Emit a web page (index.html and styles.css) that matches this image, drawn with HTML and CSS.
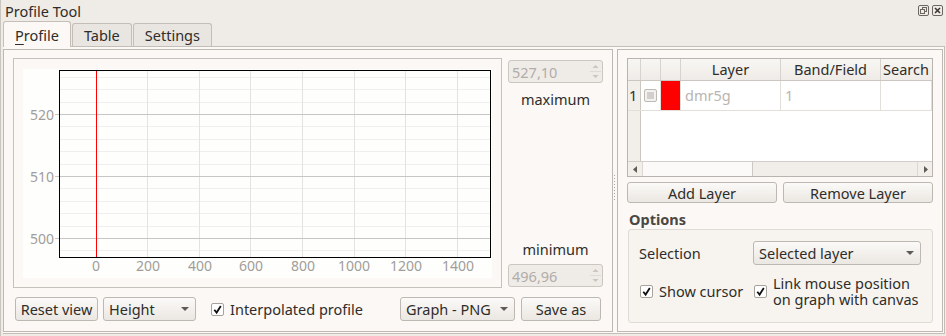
FILE: index.html
```html
<!DOCTYPE html>
<html lang="en">
<head>
    <meta charset="UTF-8">
    <title>Profile Tool</title>
    <link rel="stylesheet" href="styles.css">
</head>
<body>
<div class="dock">
    <div class="titlebar">
        <span class="title">Profile Tool</span>
        <span class="title-icons">
            <svg width="11" height="11" viewBox="0 0 11 11"><rect x="0.5" y="0.5" width="10" height="10" rx="1.5" fill="none" stroke="#6b665f"/><rect x="4.5" y="2.5" width="4" height="4" fill="none" stroke="#6b665f"/><rect x="2.5" y="4.5" width="4" height="4" fill="#efebe7" stroke="#6b665f"/></svg>
            <svg width="11" height="11" viewBox="0 0 11 11"><rect x="0.5" y="0.5" width="10" height="10" rx="1.5" fill="none" stroke="#6b665f"/><path d="M3 3 L8 8 M8 3 L3 8" stroke="#3c3934" stroke-width="1.6"/></svg>
        </span>
    </div>
    <div class="tabbar">
        <div class="tab active"><span class="mnemonic">P</span>rofile</div>
        <div class="tab">Table</div>
        <div class="tab">Settings</div>
    </div>
    <div class="pane">
        <div class="panel panel-left">
            <div class="plot-row">
                <div class="plot-frame">
                    <svg class="plot" width="469" height="209" viewBox="0 0 469 209" shape-rendering="crispEdges">
                        <g stroke="#efefef">
                            <line x1="37" y1="8.5" x2="467" y2="8.5"/>
                            <line x1="37" y1="20.5" x2="467" y2="20.5"/>
                            <line x1="37" y1="33.5" x2="467" y2="33.5"/>
                            <line x1="37" y1="57.5" x2="467" y2="57.5"/>
                            <line x1="37" y1="70.5" x2="467" y2="70.5"/>
                            <line x1="37" y1="82.5" x2="467" y2="82.5"/>
                            <line x1="37" y1="95.5" x2="467" y2="95.5"/>
                            <line x1="37" y1="119.5" x2="467" y2="119.5"/>
                            <line x1="37" y1="132.5" x2="467" y2="132.5"/>
                            <line x1="37" y1="144.5" x2="467" y2="144.5"/>
                            <line x1="37" y1="157.5" x2="467" y2="157.5"/>
                            <line x1="37" y1="181.5" x2="467" y2="181.5"/>
                        </g>
                        <g stroke="#e3e3e3">
                            <line x1="124.5" y1="2" x2="124.5" y2="188"/>
                            <line x1="176.5" y1="2" x2="176.5" y2="188"/>
                            <line x1="227.5" y1="2" x2="227.5" y2="188"/>
                            <line x1="279.5" y1="2" x2="279.5" y2="188"/>
                            <line x1="331.5" y1="2" x2="331.5" y2="188"/>
                            <line x1="382.5" y1="2" x2="382.5" y2="188"/>
                            <line x1="434.5" y1="2" x2="434.5" y2="188"/>
                        </g>
                        <g stroke="#c6c6c6">
                            <line x1="32" y1="45.5" x2="467" y2="45.5"/>
                            <line x1="32" y1="107.5" x2="467" y2="107.5"/>
                            <line x1="32" y1="169.5" x2="467" y2="169.5"/>
                        </g>
                        <line x1="73.5" y1="2" x2="73.5" y2="188" stroke="#ff0000"/>
                        <rect x="36.5" y="1.5" width="431" height="187" fill="none" stroke="#000" stroke-width="1.4"/>
                        <g class="tick-labels" text-anchor="end">
                            <text x="31" y="50.5">520</text>
                            <text x="31" y="112.5">510</text>
                            <text x="31" y="174.5">500</text>
                        </g>
                        <g class="tick-labels" text-anchor="middle">
                            <text x="73" y="202">0</text>
                            <text x="125" y="202">200</text>
                            <text x="177" y="202">400</text>
                            <text x="228" y="202">600</text>
                            <text x="280" y="202">800</text>
                            <text x="331" y="202">1000</text>
                            <text x="383" y="202">1200</text>
                            <text x="435" y="202">1400</text>
                        </g>
                    </svg>
                </div>
                <div class="range">
                    <div class="spin">
                        <span>527,10</span>
                        <svg class="spin-arrows" width="13" height="21" viewBox="0 0 13 21"><path d="M1 10.5 H12" stroke="#dedad6"/><path d="M3.5 7 L6.5 4 L9.5 7 Z" fill="#c9c5c1"/><path d="M3.5 14 L6.5 17 L9.5 14 Z" fill="#c9c5c1"/></svg>
                    </div>
                    <div class="range-label">maximum</div>
                    <div class="range-fill"></div>
                    <div class="range-label">minimum</div>
                    <div class="spin spin-min">
                        <span>496,96</span>
                        <svg class="spin-arrows" width="13" height="21" viewBox="0 0 13 21"><path d="M1 10.5 H12" stroke="#dedad6"/><path d="M3.5 7 L6.5 4 L9.5 7 Z" fill="#c9c5c1"/><path d="M3.5 14 L6.5 17 L9.5 14 Z" fill="#c9c5c1"/></svg>
                    </div>
                </div>
            </div>
            <div class="controls">
                <div class="button reset-btn">Reset view</div>
                <div class="combo height-combo">Height<span class="caret"></span></div>
                <label class="check interp">
                    <span class="box"><svg width="11" height="11" viewBox="0 0 11 11"><path d="M2.3 5.8 L4.6 8.6 L8.8 2" fill="none" stroke="#111" stroke-width="1.8"/></svg></span>
                    Interpolated profile
                </label>
                <div class="combo graph-combo">Graph - PNG<span class="caret"></span></div>
                <div class="button save-btn">Save as</div>
            </div>
        </div>
        <div class="splitter"><span class="grip"></span></div>
        <div class="panel panel-right">
            <div class="table">
                <div class="table-head">
                    <div class="th corner"></div>
                    <div class="th"></div>
                    <div class="th"></div>
                    <div class="th">Layer</div>
                    <div class="th">Band/Field</div>
                    <div class="th th-last">Search</div>
                </div>
                <div class="table-row">
                    <div class="td row-num">1</div>
                    <div class="td cell-check"><span class="mini-box"></span></div>
                    <div class="td cell-color"></div>
                    <div class="td muted">dmr5g</div>
                    <div class="td muted">1</div>
                    <div class="td"></div>
                </div>
                <div class="table-fill"><div class="fill-head"></div></div>
                <div class="hscroll">
                    <span class="scroll-btn"><svg width="5" height="7" viewBox="0 0 5 7"><path d="M4 0 L0 3.5 L4 7 Z" fill="#5f5b56"/></svg></span>
                    <span class="scroll-handle"></span>
                    <span class="scroll-trough"></span>
                    <span class="scroll-btn"><svg width="5" height="7" viewBox="0 0 5 7"><path d="M1 0 L5 3.5 L1 7 Z" fill="#5f5b56"/></svg></span>
                </div>
            </div>
            <div class="layer-buttons">
                <div class="button">Add Layer</div>
                <div class="button">Remove Layer</div>
            </div>
            <div class="options-title">Options</div>
            <div class="options">
                <div class="options-grid">
                    <span class="sel-label">Selection</span>
                    <div class="combo sel-combo">Selected layer<span class="caret"></span></div>
                    <label class="check">
                        <span class="box"><svg width="11" height="11" viewBox="0 0 11 11"><path d="M2.3 5.8 L4.6 8.6 L8.8 2" fill="none" stroke="#111" stroke-width="1.8"/></svg></span>
                        Show cursor
                    </label>
                    <label class="check">
                        <span class="box"><svg width="11" height="11" viewBox="0 0 11 11"><path d="M2.3 5.8 L4.6 8.6 L8.8 2" fill="none" stroke="#111" stroke-width="1.8"/></svg></span>
                        <span class="two-line"><span>Link mouse position</span><span>on graph with canvas</span></span>
                    </label>
                </div>
            </div>
        </div>
    </div>
</div>
</body>
</html>
```

FILE: styles.css
```css
* {
    box-sizing: border-box;
}
body {
    margin: 0;
    width: 946px;
    height: 336px;
    overflow: hidden;
    background-color: #efebe7;
    font-family: "Noto Sans", "Open Sans", sans-serif;
    font-size: 14.5px;
    line-height: 18px;
    color: #2f2d2a;
}
.dock {
    height: 336px;
    border-left: 1px solid #c9c4be;
    display: flex;
    flex-direction: column;
}
.titlebar {
    height: 21px;
    display: flex;
    align-items: center;
    justify-content: space-between;
    padding: 0 3px 0 4px;
}
.title-icons {
    display: flex;
    gap: 3px;
    margin-top: -1px;
}
.title-icons svg {
    display: block;
}
.tabbar {
    height: 25px;
    display: flex;
    align-items: flex-end;
    padding-left: 2px;
    position: relative;
    z-index: 1;
}
.tab {
    height: 23px;
    padding: 0 11px;
    margin-right: 1px;
    border: 1px solid #c3beb8;
    border-bottom: none;
    border-radius: 3px 3px 0 0;
    background-color: #e9e5e0;
    line-height: 22px;
}
.tab.active {
    height: 26px;
    margin-bottom: -1px;
    background-color: #fbf8f5;
    line-height: 26px;
}
.mnemonic {
    text-decoration: underline;
    text-underline-offset: 3px;
}
.pane {
    margin-left: 2px;
    width: 942px;
    height: 288px;
    border-top: 1px solid #c3beb8;
    border-right: 1px solid #c3beb8;
    border-bottom: 1px solid #c3beb8;
    background-color: #fbf8f5;
    padding: 2px 1px 1px 0;
    display: flex;
}
.panel {
    height: 283px;
    border: 1px solid #bdb8b2;
}
.panel-left {
    width: 610px;
    padding: 8px 9px 0 9px;
    display: flex;
    flex-direction: column;
    gap: 9px;
}
.splitter {
    width: 4px;
    position: relative;
}
.splitter .grip {
    position: absolute;
    left: 1px;
    top: 126px;
    width: 1px;
    height: 26px;
    background-image: linear-gradient(#a9a49e 50%, transparent 50%);
    background-size: 1px 3px;
}
.panel-right {
    width: 326px;
    padding: 8px 9px 0 9px;
}
.plot-row {
    height: 230px;
    display: flex;
    gap: 6px;
}
.plot-frame {
    width: 489px;
    height: 230px;
    border: 1px solid #c6c1bb;
    padding: 10px 9px 9px 9px;
}
.plot {
    display: block;
    background-color: #fefefd;
}
.tick-labels {
    font-family: "Noto Sans", sans-serif;
    font-size: 14px;
    fill: #a19d99;
}
.range {
    width: 95px;
    display: flex;
    flex-direction: column;
    align-items: center;
}
.spin {
    width: 95px;
    height: 23px;
    margin-top: 2px;
    border: 1px solid #cbc6c0;
    border-radius: 3px;
    background-color: #efebe7;
    color: #b1ada9;
    display: flex;
    align-items: center;
    justify-content: space-between;
    padding-left: 3px;
    padding-right: 0;
}
.spin-min {
    margin-top: 6px;
    margin-bottom: 1px;
}
.spin-arrows {
    display: block;
}
.range-label {
    margin-top: 7px;
    height: 18px;
}
.range-fill {
    flex: 1;
}
.controls {
    height: 24px;
    margin: 0 2px;
    display: flex;
    align-items: center;
}
.button, .combo {
    height: 24px;
    border: 1px solid #bdb8b2;
    border-radius: 3px;
    background: linear-gradient(#fbfaf8, #ebe7e2);
    display: flex;
    align-items: center;
}
.button {
    justify-content: center;
}
.combo {
    padding-left: 5px;
    justify-content: space-between;
}
.caret {
    width: 0;
    height: 0;
    margin-right: 6px;
    border-left: 4px solid transparent;
    border-right: 4px solid transparent;
    border-top: 4px solid #5f5a55;
}
.reset-btn {
    width: 83px;
}
.height-combo {
    width: 93px;
    margin-left: 5px;
}
.check {
    display: flex;
    align-items: center;
    gap: 6px;
}
.box {
    width: 13px;
    height: 13px;
    border: 1px solid #a7a29c;
    border-radius: 2px;
    background-color: #fff;
    display: flex;
    align-items: center;
    justify-content: center;
}
.box svg {
    display: block;
}
.interp {
    margin-left: 15px;
}
.graph-combo {
    width: 115px;
    margin-left: auto;
}
.save-btn {
    width: 80px;
    margin-left: 6px;
}
.table {
    width: 306px;
    height: 119px;
    border: 1px solid #b9b4ae;
    background-color: #fff;
    display: flex;
    flex-direction: column;
    overflow: hidden;
}
.table-head, .table-row {
    display: grid;
    grid-template-columns: 13px 20px 20px 100px 100px 1fr;
}
.table-head {
    height: 22px;
    border-bottom: 1px solid #cbc6c0;
    background: linear-gradient(#f8f6f3, #efebe7);
}
.th {
    border-right: 1px solid #d6d2cd;
    text-align: center;
    line-height: 21px;
}
.th-last {
    border-right: none;
    text-align: left;
    padding-left: 2px;
    white-space: nowrap;
    overflow: hidden;
}
.table-row {
    height: 30px;
    border-bottom: 1px solid #e2ded9;
}
.td {
    border-right: 1px solid #e2ded9;
    line-height: 29px;
    padding-left: 4px;
}
.row-num {
    background-color: #f2efeb;
    border-right-color: #cbc6c0;
    padding-left: 1px;
}
.cell-check {
    display: flex;
    align-items: center;
    padding-left: 3px;
}
.mini-box {
    width: 13px;
    height: 13px;
    border: 1px solid #bdb9b5;
    border-radius: 2px;
    background-color: #f4f2f0;
    box-shadow: inset 0 0 0 2px #f4f2f0, inset 0 0 0 8px #d2cfcc;
}
.cell-color {
    background-color: #ff0000;
}
.muted {
    color: #b9b5b1;
}
.table-fill {
    flex: 1;
}
.fill-head {
    width: 13px;
    height: 100%;
    background-color: #f2efeb;
    border-right: 1px solid #cbc6c0;
}
.hscroll {
    height: 15px;
    border-top: 1px solid #d2cdc8;
    background-color: #f2efeb;
    display: flex;
}
.scroll-btn {
    width: 14px;
    display: flex;
    align-items: center;
    justify-content: center;
}
.scroll-handle {
    width: 111px;
    background-color: #fbfaf8;
    border-left: 1px solid #dcd8d3;
    border-right: 1px solid #cdc8c2;
}
.scroll-trough {
    flex: 1;
    background-color: #f1eeea;
    border-right: 1px solid #dcd8d3;
}
.layer-buttons {
    margin-top: 5px;
    display: flex;
    gap: 6px;
}
.layer-buttons .button {
    width: 150px;
    height: 21px;
}
.options-title {
    margin: 7px 0 0 2px;
    height: 18px;
    font-weight: bold;
    color: #4a4744;
}
.options {
    margin: 1px 0 0 1px;
    width: 305px;
    height: 94px;
    border: 1px solid #dedad5;
    border-radius: 3px;
    background-color: #f7f4f0;
    padding: 11px 11px 0 10px;
}
.options-grid {
    display: grid;
    grid-template-columns: 114px 1fr;
    row-gap: 10px;
    align-items: center;
}
.sel-combo {
    height: 24px;
}
.options .check {
    margin-left: 1px;
}
.two-line {
    display: flex;
    flex-direction: column;
}
.two-line span {
    height: 16px;
    line-height: 16px;
}
```
